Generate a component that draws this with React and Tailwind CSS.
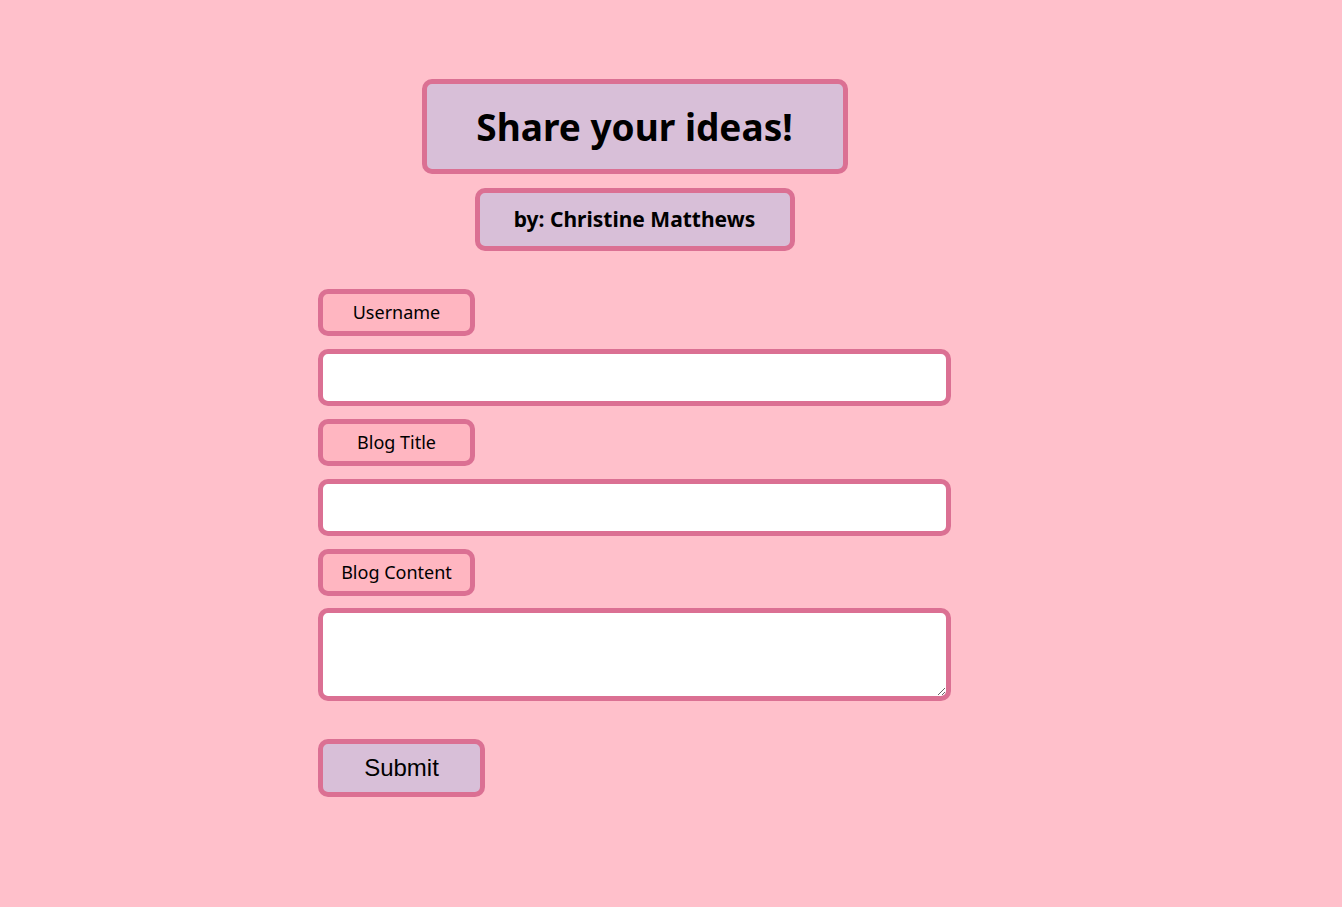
export default function App() {
  const font = { fontFamily: '"Noto Sans", "Open Sans", sans-serif' };
  return (
    <div className="min-h-[907px] w-full bg-[#ffc0cb]" style={font}>
      <div className="ml-[318px] w-[633px] pt-[79px] flex flex-col">
        <div className="flex justify-center">
          <h1 className="h-[95px] w-[426px] flex items-center justify-center rounded-[10px] border-[5px] border-[#db7093] bg-[#d8bfd8] text-[37px] font-bold text-black">
            Share your ideas!
          </h1>
        </div>
        <div className="flex justify-center mt-[14px]">
          <h2 className="h-[63px] w-[320px] flex items-center justify-center rounded-[10px] border-[5px] border-[#db7093] bg-[#d8bfd8] text-[21px] font-bold text-black">
            by: Christine Matthews
          </h2>
        </div>
        <form className="mt-[38px] flex flex-col">
          <label className="h-[47px] w-[157px] flex items-center justify-center rounded-[10px] border-[5px] border-[#db7093] bg-[#ffb6c1] text-[18px] text-black">
            Username
          </label>
          <input type="text" className="mt-[13px] h-[57px] w-[633px] rounded-[10px] border-[5px] border-[#db7093] bg-white outline-none" />
          <label className="mt-[13px] h-[47px] w-[157px] flex items-center justify-center rounded-[10px] border-[5px] border-[#db7093] bg-[#ffb6c1] text-[18px] text-black">
            Blog Title
          </label>
          <input type="text" className="mt-[13px] h-[57px] w-[633px] rounded-[10px] border-[5px] border-[#db7093] bg-white outline-none" />
          <label className="mt-[13px] h-[47px] w-[157px] flex items-center justify-center rounded-[10px] border-[5px] border-[#db7093] bg-[#ffb6c1] text-[18px] text-black">
            Blog Content
          </label>
          <textarea className="mt-[12px] h-[93px] w-[633px] rounded-[10px] border-[5px] border-[#db7093] bg-white outline-none block" />
          <div className="mt-[38px]">
            <button type="button" className="h-[58px] w-[167px] rounded-[10px] border-[5px] border-[#db7093] bg-[#d8bfd8] text-[24px] text-black" style={{ fontFamily: '"Liberation Sans", Arial, sans-serif' }}>
              Submit
            </button>
          </div>
        </form>
      </div>
    </div>
  );
}
